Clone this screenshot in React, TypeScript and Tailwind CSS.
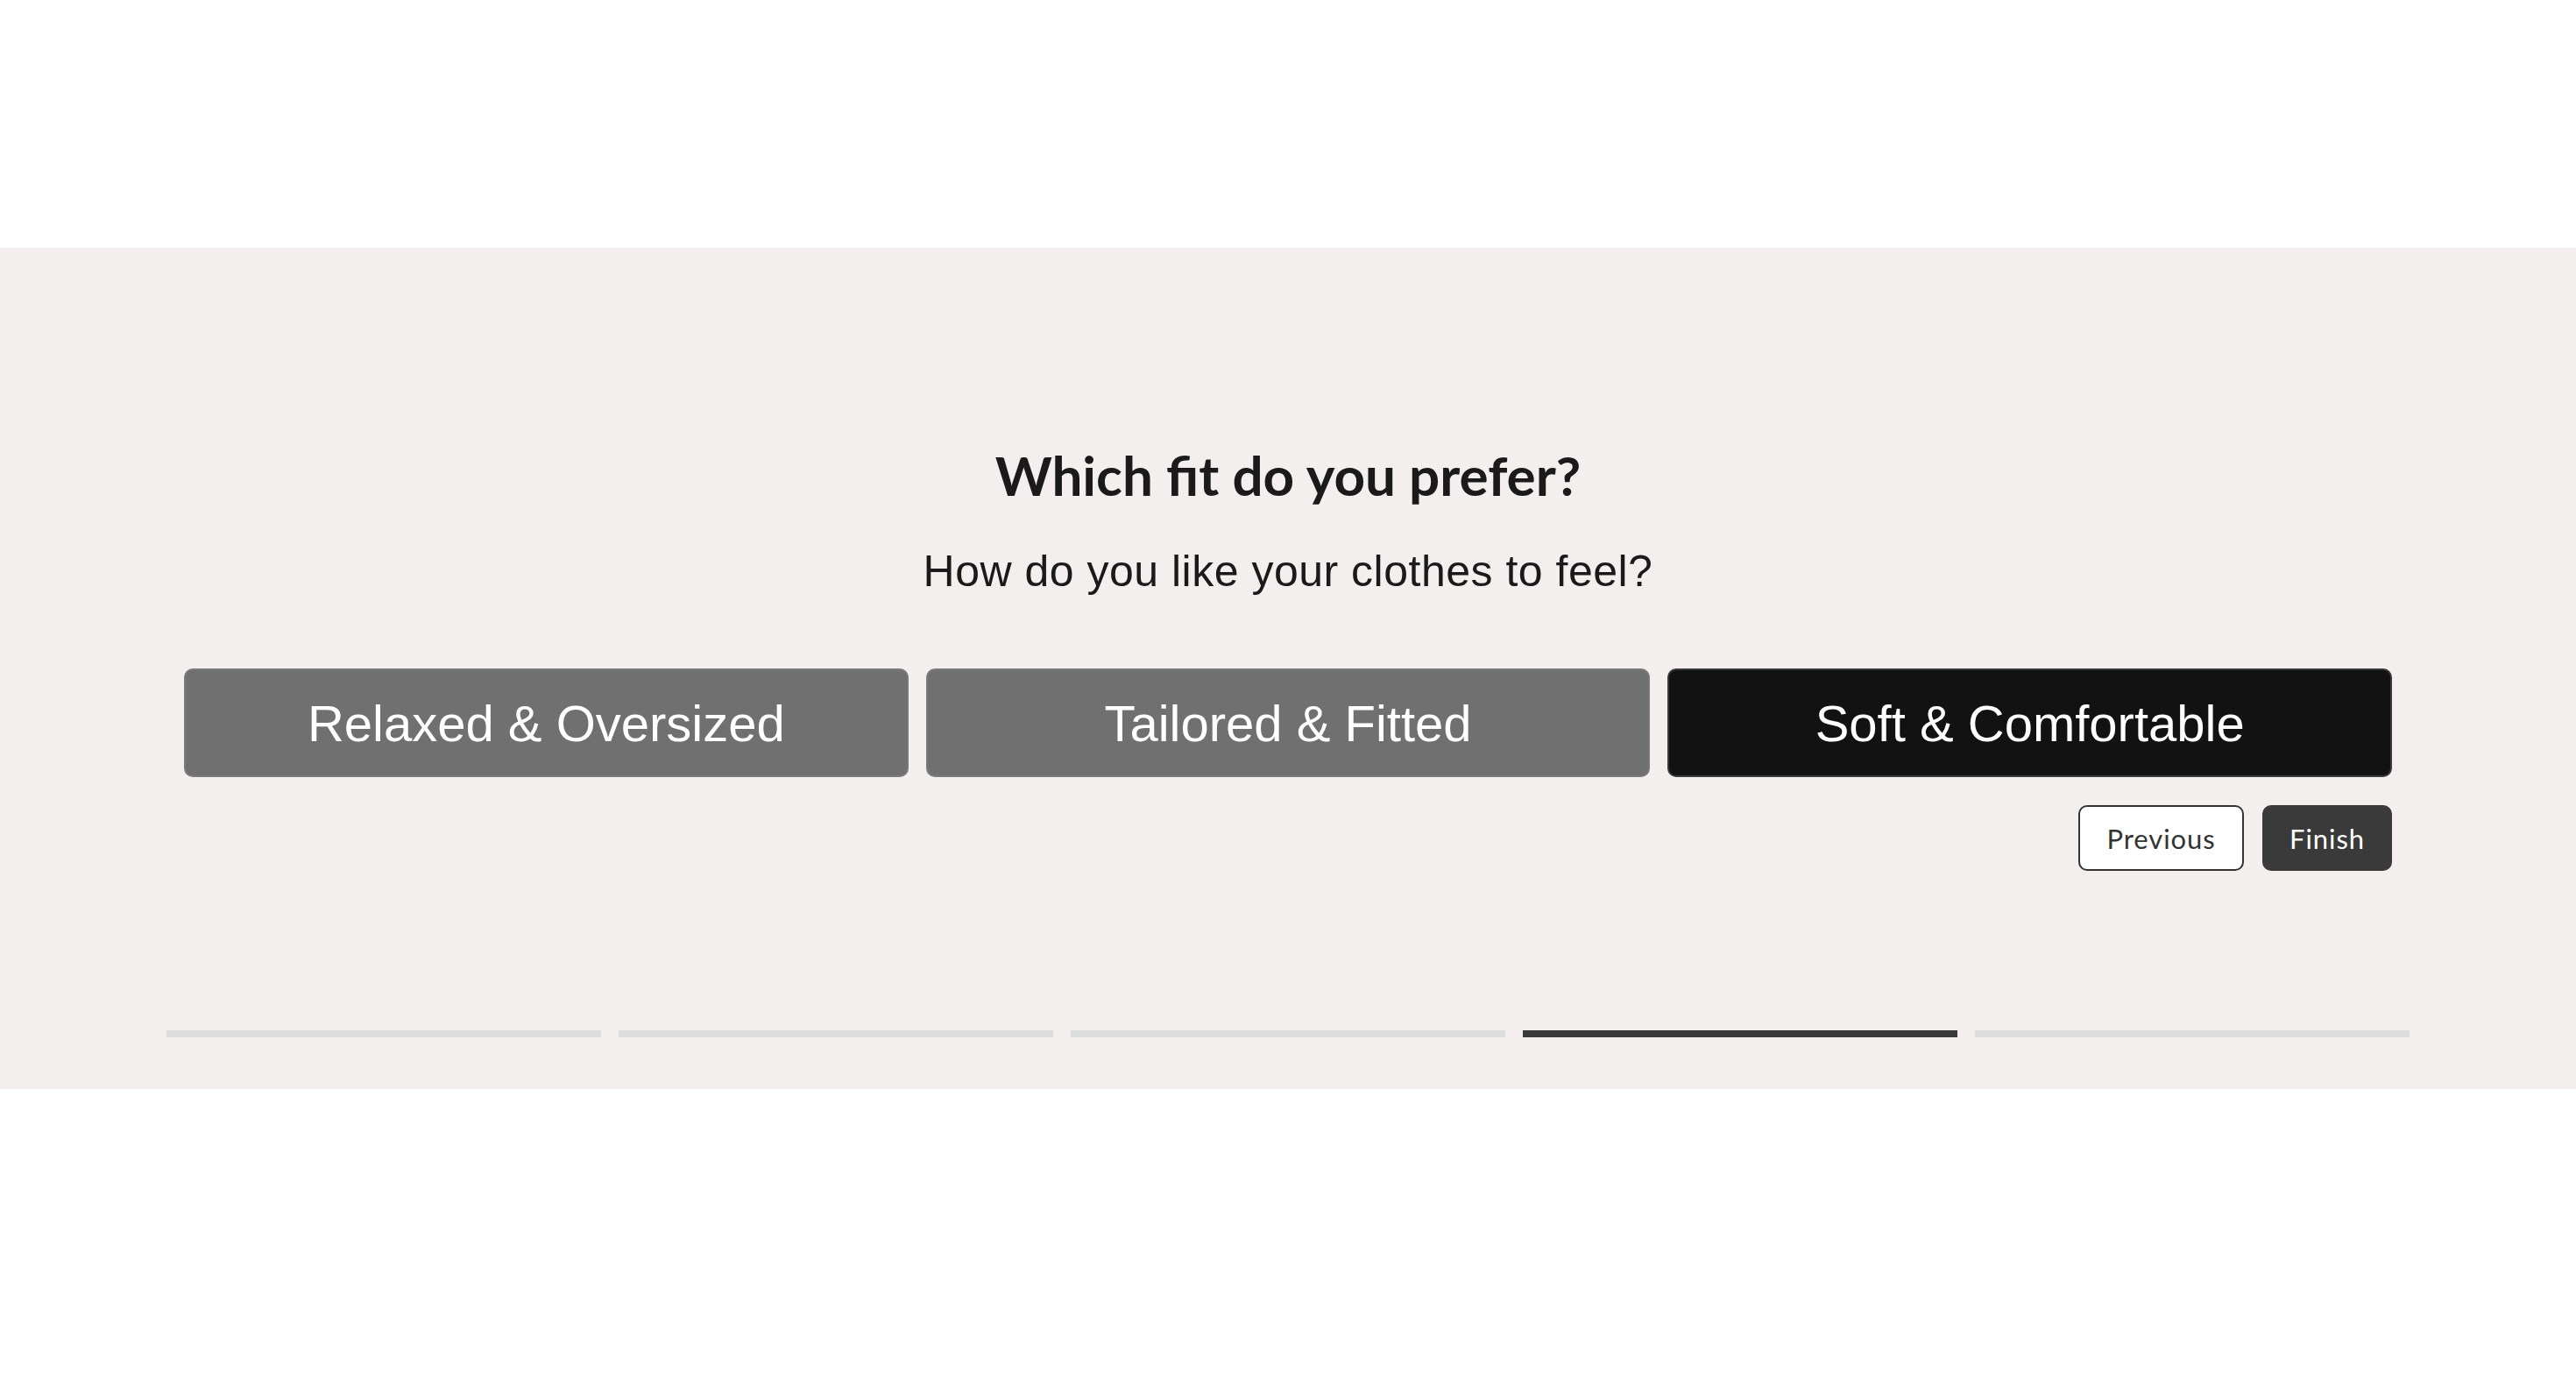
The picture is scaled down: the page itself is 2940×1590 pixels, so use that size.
import { useState } from 'react';

const options = ['Relaxed & Oversized', 'Tailored & Fitted', 'Soft & Comfortable'];

export default function App() {
  const [selected, setSelected] = useState(2);
  const step = 3;

  return (
    <div className="min-h-screen bg-white">
      <div className="h-[283px]" />
      <section className="bg-[#f3efee] pt-[222px] pb-[59px]">
        <div className="mx-auto max-w-[2520px]">
          <h1 className="text-center font-['Lato',sans-serif] text-[62px] font-bold leading-[1.2] text-[#1a1a1a]">
            Which fit do you prefer?
          </h1>
          <p className="mt-[43px] text-center font-['Liberation_Sans',sans-serif] text-[50px] leading-[1.2] tracking-[0.01em] text-[#1a1a1a]">
            How do you like your clothes to feel?
          </p>

          <div className="mt-[81px] grid grid-cols-3 gap-[20px]">
            {options.map((opt, i) => (
              <button
                key={opt}
                onClick={() => setSelected(i)}
                className={
                  i === selected
                    ? "h-[124px] rounded-[10px] border-2 border-[#3a3a3a] bg-[#121212] font-['Liberation_Sans',sans-serif] text-[58px] text-white"
                    : "h-[124px] rounded-[10px] border-2 border-[#7a7a7a] bg-[#707070] font-['Liberation_Sans',sans-serif] text-[58px] text-white"
                }
              >
                {opt}
              </button>
            ))}
          </div>

          <div className="mt-[32px] flex justify-end gap-[21px]">
            <button className="h-[75px] w-[189px] rounded-[10px] border-2 border-[#333] bg-white font-['Lato',sans-serif] text-[31px] tracking-[0.03em] text-[#333]">
              Previous
            </button>
            <button className="h-[75px] w-[148px] rounded-[10px] bg-[#3a3a3a] font-['Lato',sans-serif] text-[31px] tracking-[0.03em] text-white">
              Finish
            </button>
          </div>
        </div>

        <div className="mx-auto mt-[182px] flex max-w-[2560px] gap-[20px]">
          {[0, 1, 2, 3, 4].map((i) => (
            <div
              key={i}
              className={i === step ? 'h-[8px] flex-1 bg-[#3a3a3a]' : 'h-[8px] flex-1 bg-[#dcdcdc]'}
            />
          ))}
        </div>
      </section>
    </div>
  );
}
